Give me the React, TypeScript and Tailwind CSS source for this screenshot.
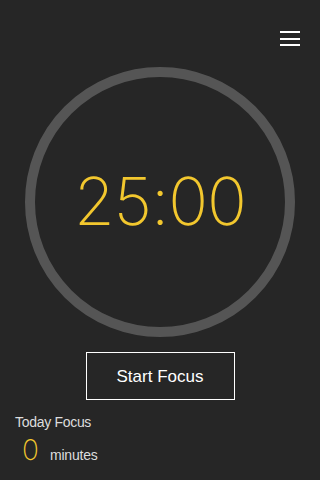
import type { FC } from 'react';

const MenuIcon: FC = () => (
  <button className="flex flex-col gap-[4.5px] w-5 py-1" aria-label="menu">
    <span className="block h-[2px] w-5 bg-white" />
    <span className="block h-[2px] w-5 bg-white" />
    <span className="block h-[2px] w-5 bg-white" />
  </button>
);

const App: FC = () => {
  return (
    <div
      className="w-[320px] h-[480px] bg-[#262626] overflow-hidden flex flex-col"
      style={{ fontFamily: '"Liberation Sans", Arial, sans-serif' }}
    >
      <div className="flex justify-end pt-[27px] pr-5 h-[67px]">
        <MenuIcon />
      </div>

      <div className="flex justify-center">
        <div className="w-[270px] h-[270px] rounded-full border-[10px] border-[#555555] flex items-center justify-center">
          <span className="text-[66px] leading-none font-extralight text-[#f2c72e] font-['Inter'] tracking-[-1px] pb-[2px]">
            25:00
          </span>
        </div>
      </div>

      <div className="flex justify-center mt-[15px]">
        <button className="w-[149px] h-[48px] border border-white text-white text-[17px] flex items-center justify-center pt-[2px]">
          Start Focus
        </button>
      </div>

      <div className="pl-[15px] mt-[13px] text-[#dddddd]">
        <div className="text-[14px] leading-[18px] tracking-[-0.3px]">Today Focus</div>
        <div className="flex items-baseline mt-[5px] pl-[7px]">
          <span className="text-[28px] leading-none font-extralight text-[#f2c72e] font-['Inter']">0</span>
          <span className="text-[14px] ml-[11px] leading-[18px] tracking-[-0.2px]">minutes</span>
        </div>
      </div>
    </div>
  );
};

export default App;
